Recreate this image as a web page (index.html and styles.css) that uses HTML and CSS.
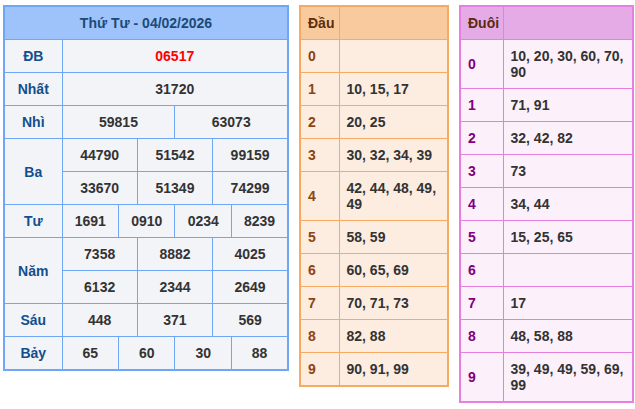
FILE: index.html
```html
<!DOCTYPE html>
<html lang="vi">
<head>
<meta charset="utf-8">
<title>Kết quả xổ số</title>
<link rel="stylesheet" href="styles.css">
</head>
<body>
<div class="wrap">
  <table class="kq">
    <colgroup>
      <col class="c-label">
      <col><col><col><col><col><col><col><col><col><col><col><col>
    </colgroup>
    <thead>
      <tr><th colspan="13" class="title">Thứ Tư - 04/02/2026</th></tr>
    </thead>
    <tbody>
      <tr><th class="lbl">ĐB</th><td colspan="12" class="db">06517</td></tr>
      <tr><th class="lbl">Nhất</th><td colspan="12">31720</td></tr>
      <tr><th class="lbl">Nhì</th><td colspan="6">59815</td><td colspan="6">63073</td></tr>
      <tr><th class="lbl" rowspan="2">Ba</th><td colspan="4">44790</td><td colspan="4">51542</td><td colspan="4">99159</td></tr>
      <tr><td colspan="4">33670</td><td colspan="4">51349</td><td colspan="4">74299</td></tr>
      <tr><th class="lbl">Tư</th><td colspan="3">1691</td><td colspan="3">0910</td><td colspan="3">0234</td><td colspan="3">8239</td></tr>
      <tr><th class="lbl" rowspan="2">Năm</th><td colspan="4">7358</td><td colspan="4">8882</td><td colspan="4">4025</td></tr>
      <tr><td colspan="4">6132</td><td colspan="4">2344</td><td colspan="4">2649</td></tr>
      <tr><th class="lbl">Sáu</th><td colspan="4">448</td><td colspan="4">371</td><td colspan="4">569</td></tr>
      <tr><th class="lbl">Bảy</th><td colspan="3">65</td><td colspan="3">60</td><td colspan="3">30</td><td colspan="3">88</td></tr>
    </tbody>
  </table>

  <table class="lt dau">
    <colgroup><col class="c-key"><col></colgroup>
    <thead><tr><th>Đầu</th><th></th></tr></thead>
    <tbody>
      <tr><th>0</th><td></td></tr>
      <tr><th>1</th><td>10, 15, 17</td></tr>
      <tr><th>2</th><td>20, 25</td></tr>
      <tr><th>3</th><td>30, 32, 34, 39</td></tr>
      <tr><th>4</th><td>42, 44, 48, 49, 49</td></tr>
      <tr><th>5</th><td>58, 59</td></tr>
      <tr><th>6</th><td>60, 65, 69</td></tr>
      <tr><th>7</th><td>70, 71, 73</td></tr>
      <tr><th>8</th><td>82, 88</td></tr>
      <tr><th>9</th><td>90, 91, 99</td></tr>
    </tbody>
  </table>

  <table class="lt duoi">
    <colgroup><col class="c-key"><col></colgroup>
    <thead><tr><th>Đuôi</th><th></th></tr></thead>
    <tbody>
      <tr><th>0</th><td>10, 20, 30, 60, 70, 90</td></tr>
      <tr><th>1</th><td>71, 91</td></tr>
      <tr><th>2</th><td>32, 42, 82</td></tr>
      <tr><th>3</th><td>73</td></tr>
      <tr><th>4</th><td>34, 44</td></tr>
      <tr><th>5</th><td>15, 25, 65</td></tr>
      <tr><th>6</th><td></td></tr>
      <tr><th>7</th><td>17</td></tr>
      <tr><th>8</th><td>48, 58, 88</td></tr>
      <tr><th>9</th><td>39, 49, 49, 59, 69, 99</td></tr>
    </tbody>
  </table>
</div>
</body>
</html>
```

FILE: styles.css
```css
html, body {
  margin: 0;
  padding: 0;
  background: #ffffff;
}

body {
  font-family: "Liberation Sans", Arial, sans-serif;
  font-size: 14px;
  font-weight: bold;
  line-height: 16px;
  color: #333333;
}

.wrap {
  display: flex;
  align-items: flex-start;
  gap: 10px;
  padding: 5px 0 0 3px;
}

table {
  border-collapse: collapse;
  table-layout: fixed;
}

th, td {
  padding: 8px 4px;
  font-weight: bold;
  vertical-align: middle;
}

/* Left results table */
.kq {
  width: 286px;
  border: 2px solid #6fa6f5;
}

.kq .c-label {
  width: 58px;
}

.kq th,
.kq td {
  border: 1px solid #6fa6f5;
  background: #f3f4f8;
  text-align: center;
}

.kq .title {
  background: #9ec3fb;
  color: #1b4a78;
}

.kq .lbl {
  color: #114f8e;
}

.kq .db {
  color: #ff0000;
}

/* Head/tail tables */
.lt th,
.lt td {
  text-align: left;
  padding: 8px 3px 8px 7px;
}

.dau {
  width: 150px;
  border: 2px solid #f7aa62;
}

.dau .c-key {
  width: 39px;
}

.dau th,
.dau td {
  border: 1px solid #f7aa62;
  background: #fdede1;
}

.dau tbody th {
  color: #8b4513;
}

.dau thead th {
  background: #f9ca9d;
  color: #5b2f0e;
}

.duoi {
  width: 175px;
  border: 2px solid #e67fe0;
}

.duoi .c-key {
  width: 43px;
}

.duoi th,
.duoi td {
  border: 1px solid #e67fe0;
  background: #fcf0fa;
}

.duoi tbody th {
  color: #800080;
}

.duoi thead th {
  background: #e4abe6;
  color: #5b2a10;
}
```
